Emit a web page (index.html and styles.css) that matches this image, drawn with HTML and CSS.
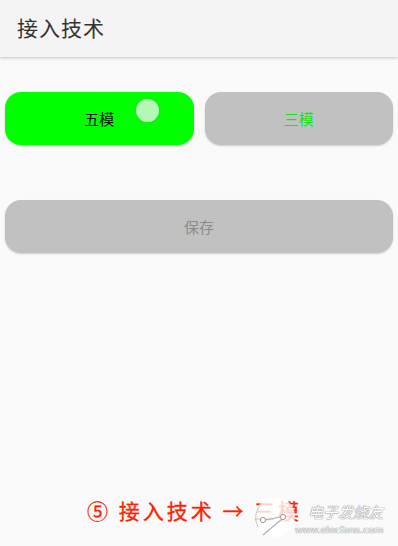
FILE: index.html
```html
<!DOCTYPE html>
<html lang="zh">
<head>
<meta charset="utf-8">
<link rel="stylesheet" href="styles.css">
</head>
<body>
<header class="bar"><h1 class="title">接入技术</h1></header>
<main class="content">
  <div class="modes">
    <button class="mode mode-on">五模<span class="ripple"></span></button>
    <button class="mode mode-off">三模</button>
  </div>
  <button class="save">保存</button>
  <div class="caption">
    <span class="cap-text">⑤ 接入技术 → 三模</span>
    <div class="mark">
      <svg class="mark-logo" width="44" height="44" viewBox="0 0 44 44">
        <circle cx="22" cy="22" r="20" fill="rgba(255,255,255,0.8)"/>
        <path d="M5 32 A20 20 0 0 1 9 8" fill="none" stroke="#c4c4c4" stroke-width="1"/>
        <path d="M10 40 L29 24 M12 25 L27 22" fill="none" stroke="#b0b0b0" stroke-width="1.2"/>
        <circle cx="10" cy="25" r="2.6" fill="#fff" stroke="#999" stroke-width="1"/>
        <circle cx="30" cy="22" r="2.6" fill="#fff" stroke="#999" stroke-width="1"/>
      </svg>
      <div class="mark-text">
        <span class="mark-cn">电子发烧友</span>
        <span class="mark-url">www.elecfans.com</span>
      </div>
    </div>
  </div>
</main>
</body>
</html>
```
FILE: styles.css
```css
* { box-sizing: border-box; }
html, body { margin: 0; padding: 0; }
body {
  width: 398px;
  height: 546px;
  overflow: hidden;
  background: #fafafa;
  font-family: "Noto Sans CJK SC", "Noto Sans", sans-serif;
}
.bar {
  height: 57px;
  background: #f4f4f4;
  box-shadow: 0 1px 3px rgba(0,0,0,0.22);
  display: flex;
  align-items: center;
  padding-left: 17px;
  position: relative;
}
.title {
  margin: 0;
  font-size: 21px;
  font-weight: 400;
  color: #333;
  letter-spacing: 1px;
  line-height: 1;
  margin-top: -2px;
}
.content {
  padding: 35px 5px 0 5px;
}
.modes {
  display: flex;
  gap: 11px;
}
.mode {
  flex: 1;
  height: 53px;
  border: none;
  border-radius: 16px;
  font-family: inherit;
  font-size: 15px;
  position: relative;
  padding: 0;
  box-shadow: 0 1px 2px rgba(0,0,0,0.18);
}
.mode-on {
  background: #00ff00;
  color: #111;
}
.mode-off {
  background: #c1c1c1;
  color: #11e611;
}
.ripple {
  position: absolute;
  left: 131px;
  top: 7px;
  width: 23px;
  height: 23px;
  border-radius: 50%;
  background: #b5f7b5;
  box-shadow: 0 0 2px 1px rgba(60,200,60,0.6);
}
.save {
  display: block;
  width: 100%;
  height: 53px;
  margin-top: 55px;
  border: none;
  border-radius: 16px;
  background: #c1c1c1;
  color: #8c8c8c;
  font-family: inherit;
  font-size: 15px;
  box-shadow: 0 1px 2px rgba(0,0,0,0.18);
}
.caption {
  margin-top: 244px;
  padding-left: 82px;
  position: relative;
  height: 26px;
}
.cap-text {
  font-size: 21px;
  line-height: 26px;
  color: #ff2200;
  font-weight: 400;
  letter-spacing: 3px;
  white-space: nowrap;
  -webkit-text-stroke: 0.3px #ff2200;
}
.mark {
  position: absolute;
  left: 248px;
  top: -2px;
  display: flex;
  align-items: flex-start;
}
.mark-logo { display: block; }
.mark-text {
  display: flex;
  flex-direction: column;
  margin-left: -2px;
  margin-top: 7px;
}
.mark-cn {
  font-size: 15px;
  line-height: 19px;
  font-style: italic;
  color: #fff;
  letter-spacing: 0;
  padding-left: 13px;
  text-shadow: 0 0 1px #777, 0 0 1px #777;
}
.mark-url {
  font-family: "DejaVu Sans", sans-serif;
  font-size: 9.5px;
  line-height: 11px;
  color: #fff;
  letter-spacing: 0;
  margin-top: 3px;
  text-shadow: 0 0 1px #777, 0 0 1px #777;
}
```
